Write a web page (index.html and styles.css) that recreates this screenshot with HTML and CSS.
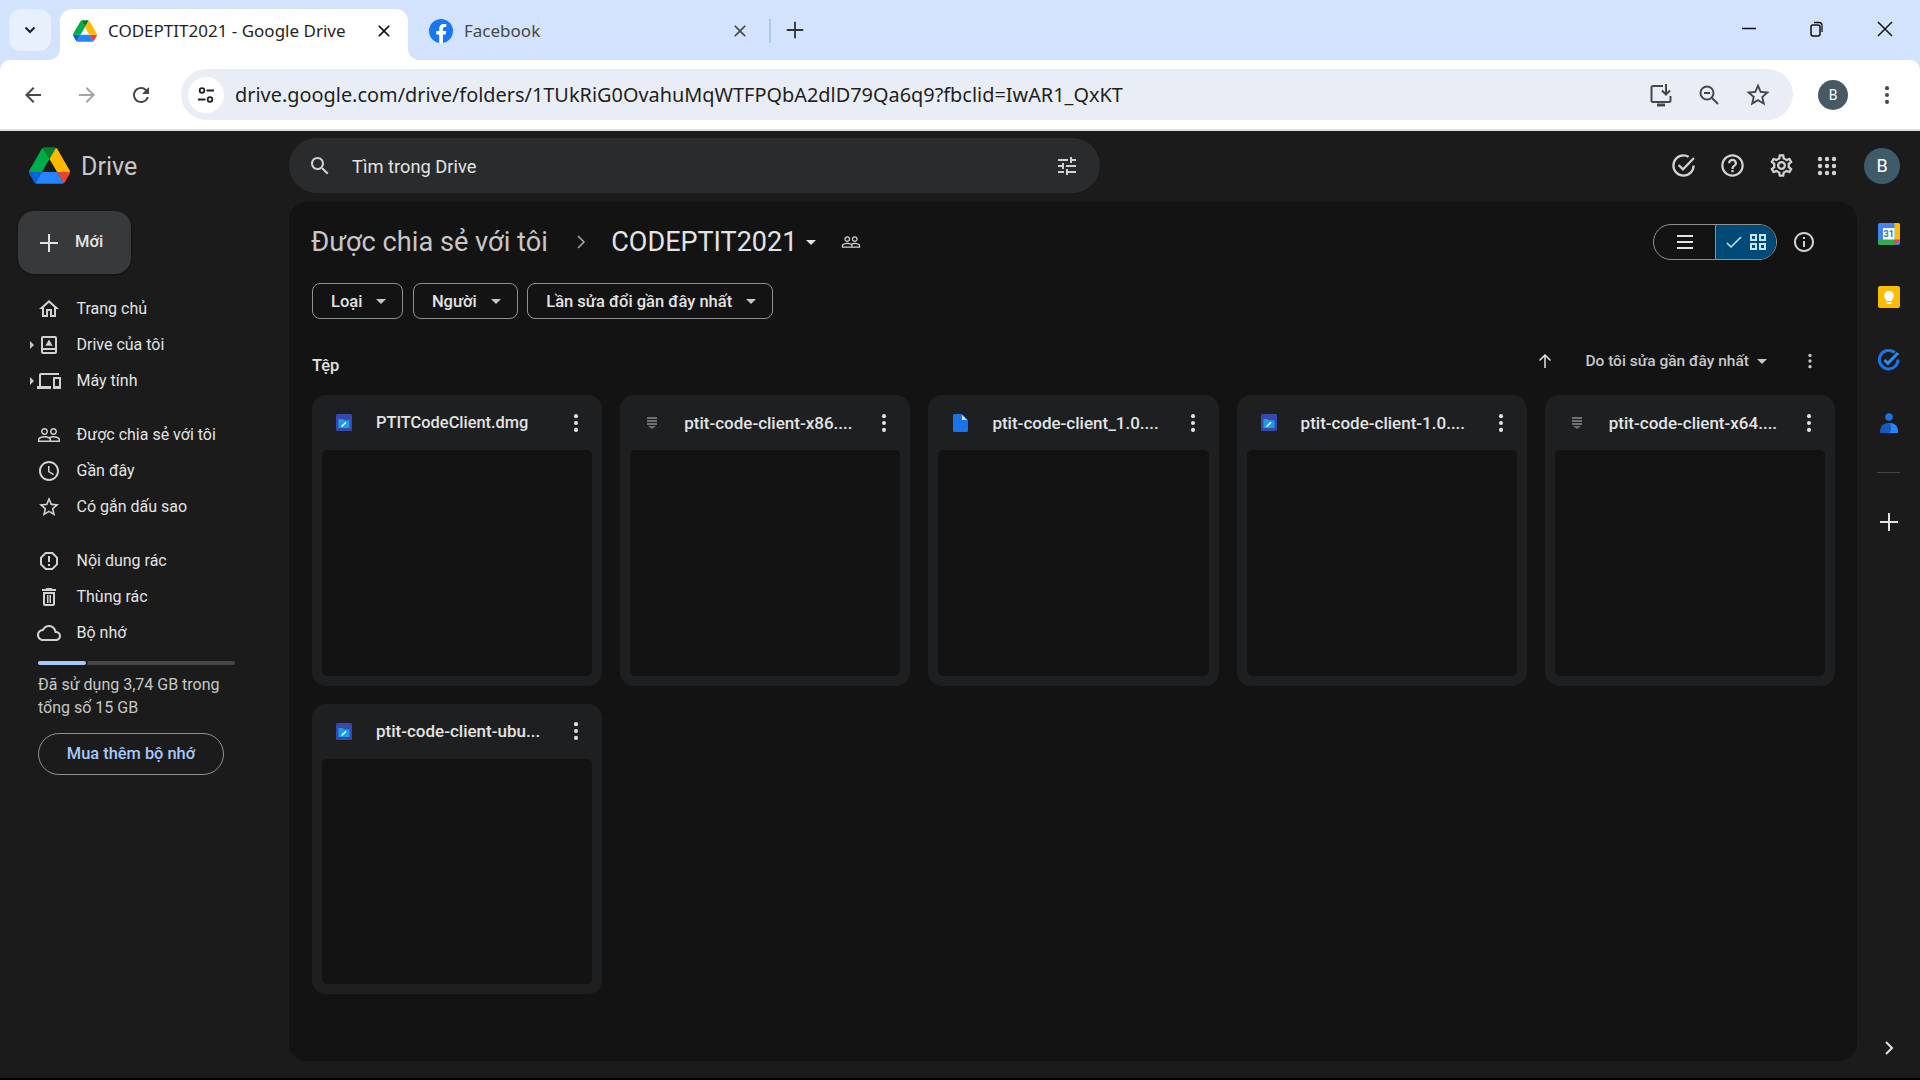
FILE: index.html
```html
<!DOCTYPE html>
<html lang="en">
<head>
    <meta charset="UTF-8">
    <meta name="viewport" content="width=device-width, initial-scale=1.0">
    <title>CODEPTIT2021 - Google Drive</title>
    <link rel="stylesheet" href="styles.css">
</head>
<body>
    <svg class="sprite">
        <symbol id="i-home" viewBox="0 0 24 24"><path d="M12 5.69l5 4.5V18h-2v-6H9v6H7v-7.81l5-4.5M12 3L2 12h3v8h6v-6h2v6h6v-8h3L12 3z"/></symbol>
        <symbol id="i-mydrive" viewBox="0 0 24 24"><path fill-rule="evenodd" d="M6 3h12a2 2 0 0 1 2 2v14a2 2 0 0 1-2 2H6a2 2 0 0 1-2-2V5a2 2 0 0 1 2-2zm0 2v10h12V5H6zm0 12v2h12v-2H6z"/><path d="M12 6.6l3.6 6.2H8.4z"/></symbol>
        <symbol id="i-devices" viewBox="0 0 24 24"><path d="M4 6h18V4H4c-1.1 0-2 .9-2 2v11H0v3h14v-3H4V6zm19 2h-6c-.55 0-1 .45-1 1v10c0 .55.45 1 1 1h6c.55 0 1-.45 1-1V9c0-.55-.45-1-1-1zm-1 9h-4v-7h4v7z"/></symbol>
        <symbol id="i-people" viewBox="0 0 24 24"><path d="M16.5 13c-1.2 0-3.07.34-4.5 1-1.43-.67-3.3-1-4.5-1C5.33 13 1 14.08 1 16.25V19h22v-2.75c0-2.17-4.33-3.25-6.5-3.25zm-4 4.5h-10v-1.25c0-.54 2.56-1.75 5-1.75s5 1.21 5 1.75v1.25zm9 0H14v-1.25c0-.46-.2-.86-.52-1.22.88-.3 1.96-.53 3.02-.53 2.44 0 5 1.21 5 1.75v1.25zM7.5 12c1.93 0 3.5-1.57 3.5-3.5S9.43 5 7.5 5 4 6.57 4 8.5 5.57 12 7.5 12zm0-5.5c1.1 0 2 .9 2 2s-.9 2-2 2-2-.9-2-2 .9-2 2-2zm9 5.5c1.93 0 3.5-1.57 3.5-3.5S18.43 5 16.5 5 13 6.57 13 8.5s1.57 3.5 3.5 3.5zm0-5.5c1.1 0 2 .9 2 2s-.9 2-2 2-2-.9-2-2 .9-2 2-2z"/></symbol>
        <symbol id="i-clock" viewBox="0 0 24 24"><path d="M11.99 2C6.47 2 2 6.48 2 12s4.47 10 9.99 10C17.52 22 22 17.52 22 12S17.52 2 11.99 2zM12 20c-4.42 0-8-3.58-8-8s3.58-8 8-8 8 3.58 8 8-3.58 8-8 8zm.5-13H11v6l5.25 3.15.75-1.23-4.5-2.67z"/></symbol>
        <symbol id="i-star" viewBox="0 0 24 24"><path d="M22 9.24l-7.19-.62L12 2 9.19 8.63 2 9.24l5.46 4.73L5.82 21 12 17.27 18.18 21l-1.63-7.03L22 9.24zM12 15.4l-3.76 2.27 1-4.28-3.32-2.88 4.38-.38L12 6.1l1.71 4.04 4.38.38-3.32 2.88 1 4.28L12 15.4z"/></symbol>
        <symbol id="i-spam" viewBox="0 0 24 24"><path d="M15.73 3H8.27L3 8.27v7.46L8.27 21h7.46L21 15.73V8.27L15.73 3zM19 14.9L14.9 19H9.1L5 14.9V9.1L9.1 5h5.8L19 9.1v5.8zM11 7h2v6h-2zM11 15h2v2h-2z"/></symbol>
        <symbol id="i-trash" viewBox="0 0 24 24"><path d="M16 9v10H8V9h8m-1.5-6h-5l-1 1H5v2h14V4h-3.5l-1-1zM18 7H6v12c0 1.1.9 2 2 2h8c1.1 0 2-.9 2-2V7z"/><path d="M10 10h1.5v8H10zM12.5 10H14v8h-1.5z"/></symbol>
        <symbol id="i-cloud" viewBox="0 0 24 24"><path d="M19.35 10.04C18.67 6.59 15.64 4 12 4 9.11 4 6.6 5.64 5.35 8.04 2.34 8.36 0 10.91 0 14c0 3.31 2.69 6 6 6h13c2.76 0 5-2.24 5-5 0-2.64-2.05-4.78-4.65-4.96zM19 18H6c-2.21 0-4-1.79-4-4 0-2.05 1.53-3.76 3.56-3.97l1.07-.11.5-.95C8.08 7.14 9.94 6 12 6c2.62 0 4.88 1.86 5.39 4.43l.3 1.5 1.53.11c1.56.1 2.78 1.41 2.78 2.96 0 1.65-1.35 3-3 3z"/></symbol>
        <symbol id="i-search" viewBox="0 0 24 24"><path d="M15.5 14h-.79l-.28-.27C15.41 12.59 16 11.11 16 9.5 16 5.91 13.09 3 9.5 3S3 5.91 3 9.5 5.91 16 9.5 16c1.61 0 3.09-.59 4.23-1.57l.27.28v.79l5 4.99L20.49 19l-4.99-5zm-6 0C7.01 14 5 11.99 5 9.5S7.01 5 9.5 5 14 7.01 14 9.5 11.99 14 9.5 14z"/></symbol>
        <symbol id="i-tune" viewBox="0 0 24 24"><path d="M3 17v2h6v-2H3zM3 5v2h10V5H3zm10 16v-2h8v-2h-8v-2h-2v6h2zM7 9v2H3v2h4v2h2V9H7zm14 4v-2H11v2h10zm-6-4h2V7h4V5h-4V3h-2v6z"/></symbol>
        <symbol id="i-help" viewBox="0 0 24 24"><path d="M11 18h2v-2h-2v2zm1-16C6.48 2 2 6.48 2 12s4.48 10 10 10 10-4.48 10-10S17.52 2 12 2zm0 18c-4.41 0-8-3.59-8-8s3.59-8 8-8 8 3.59 8 8-3.59 8-8 8zm0-14c-2.21 0-4 1.79-4 4h2c0-1.1.9-2 2-2s2 .9 2 2c0 2-3 1.75-3 5h2c0-2.25 3-2.5 3-5 0-2.21-1.79-4-4-4z"/></symbol>
        <symbol id="i-gear" viewBox="0 0 24 24"><path d="M19.43 12.98c.04-.32.07-.64.07-.98 0-.34-.03-.66-.07-.98l2.11-1.65c.19-.15.24-.42.12-.64l-2-3.46c-.09-.16-.26-.25-.44-.25-.06 0-.12.01-.17.03l-2.49 1c-.52-.4-1.08-.73-1.69-.98l-.38-2.65C14.46 2.18 14.25 2 14 2h-4c-.25 0-.46.18-.49.42l-.38 2.65c-.61.25-1.17.59-1.69.98l-2.49-1c-.06-.02-.12-.03-.18-.03-.17 0-.34.09-.43.25l-2 3.46c-.13.22-.07.49.12.64l2.11 1.65c-.04.32-.07.65-.07.98 0 .33.03.66.07.98l-2.11 1.65c-.19.15-.24.42-.12.64l2 3.46c.09.16.26.25.44.25.06 0 .12-.01.17-.03l2.49-1c.52.4 1.08.73 1.69.98l.38 2.65c.03.24.24.42.49.42h4c.25 0 .46-.18.49-.42l.38-2.65c.61-.25 1.17-.59 1.69-.98l2.49 1c.06.02.12.03.18.03.17 0 .34-.09.43-.25l2-3.46c.12-.22.07-.49-.12-.64l-2.11-1.65zm-1.98-1.71c.04.31.05.52.05.73 0 .21-.02.43-.05.73l-.14 1.13.89.7 1.08.84-.7 1.21-1.27-.51-1.04-.42-.9.68c-.43.32-.84.56-1.25.73l-1.06.43-.16 1.13-.2 1.35h-1.4l-.19-1.35-.16-1.13-1.06-.43c-.43-.18-.83-.41-1.23-.71l-.91-.7-1.06.43-1.27.51-.7-1.21 1.08-.84.89-.7-.14-1.13c-.03-.31-.05-.54-.05-.74s.02-.43.05-.73l.14-1.13-.89-.7-1.08-.84.7-1.21 1.27.51 1.04.42.9-.68c.43-.32.84-.56 1.25-.73l1.06-.43.16-1.13.2-1.35h1.39l.19 1.35.16 1.13 1.06.43c.43.18.83.41 1.23.71l.91.7 1.06-.43 1.27-.51.7 1.21-1.07.85-.89.7.14 1.13zM12 8c-2.21 0-4 1.79-4 4s1.79 4 4 4 4-1.79 4-4-1.79-4-4-4zm0 6c-1.1 0-2-.9-2-2s.9-2 2-2 2 .9 2 2-.9 2-2 2z"/></symbol>
        <symbol id="i-apps" viewBox="0 0 24 24"><circle cx="5" cy="5" r="2.200"/><circle cx="12" cy="5" r="2.200"/><circle cx="19" cy="5" r="2.200"/><circle cx="5" cy="12" r="2.200"/><circle cx="12" cy="12" r="2.200"/><circle cx="19" cy="12" r="2.200"/><circle cx="5" cy="19" r="2.200"/><circle cx="12" cy="19" r="2.200"/><circle cx="19" cy="19" r="2.200"/></symbol>
        <symbol id="i-ready" viewBox="0 0 24 24"><path d="M12 2a10 10 0 1 0 10 10h-2a8 8 0 1 1-8-8c1.4 0 2.7.36 3.85 1l1.45-1.45A9.9 9.9 0 0 0 12 2z"/><path d="M20.6 4.6L11.5 14l-3.1-3.1L7 12.300l4.500 4.500L22 6z"/></symbol>
        <symbol id="i-info" viewBox="0 0 24 24"><path d="M11 7h2v2h-2zm0 4h2v6h-2zm1-9C6.48 2 2 6.48 2 12s4.48 10 10 10 10-4.48 10-10S17.52 2 12 2zm0 18c-4.41 0-8-3.59-8-8s3.59-8 8-8 8 3.59 8 8-3.59 8-8 8z"/></symbol>
        <symbol id="i-dots" viewBox="0 0 24 24"><circle cx="12" cy="4.500" r="2.200"/><circle cx="12" cy="12" r="2.200"/><circle cx="12" cy="19.500" r="2.200"/></symbol>
        <symbol id="i-caret" viewBox="0 0 10 5"><path d="M0 0h10L5 5z"/></symbol>
        <symbol id="i-plus" viewBox="0 0 24 24"><path d="M11 3h2v8h8v2h-8v8h-2v-8H3v-2h8z"/></symbol>
        <symbol id="i-close" viewBox="0 0 24 24"><path d="M19 6.410L17.590 5 12 10.590 6.410 5 5 6.410 10.590 12 5 17.590 6.410 19 12 13.410 17.590 19 19 17.590 13.410 12z"/></symbol>
        <symbol id="i-dmg" viewBox="0 0 16 17"><rect width="16" height="17" rx="1.500" fill="#3949ab"/><path d="M2.500 5h4.200l1.200 1.300h5.600v7.700h-11z" fill="#1a9cf0"/><path d="M5.500 11.800l4-4 1 1-4 4-1.300.3z" fill="#fff"/></symbol>
        <symbol id="i-zip" viewBox="0 0 10 12"><path d="M0 0h10v2H0zM0 3h10v2H0zM0 6h10v2H0zM1 9h8l-4 3z" fill="#6f7072"/></symbol>
        <symbol id="i-doc" viewBox="0 0 15 18"><path d="M1.500 0H9l6 6v10.500a1.500 1.500 0 0 1-1.500 1.500h-12A1.500 1.500 0 0 1 0 16.500v-15A1.500 1.500 0 0 1 1.500 0z" fill="#1a73e8"/><path d="M9 1v5h5z" fill="#cfe2fb"/></symbol>
    </svg>

    <div class="tabstrip">
        <button class="tab-list">
            <svg width="14" height="14" viewBox="0 0 14 14"><path d="M2.500 4.500L7 9l4.500-4.500" fill="none" stroke="#1f1f1f" stroke-width="2"/></svg>
        </button>
        <div class="tab active">
            <svg class="favicon" viewBox="0 0 87.300 78">
                <path d="m6.600 66.850 3.850 6.650c.8 1.400 1.950 2.500 3.300 3.300l13.750-23.800h-27.500c0 1.550.4 3.100 1.200 4.500z" fill="#0066da"/>
                <path d="m43.650 25-13.750-23.800c-1.350.8-2.500 1.900-3.300 3.300l-25.400 44a9.060 9.060 0 0 0 -1.200 4.500h27.500z" fill="#00ac47"/>
                <path d="m73.550 76.800c1.350-.8 2.500-1.900 3.300-3.300l1.600-2.750 7.650-13.250c.8-1.400 1.200-2.950 1.200-4.500h-27.502l5.852 11.500z" fill="#ea4335"/>
                <path d="m43.650 25 13.750-23.800c-1.350-.8-2.900-1.200-4.500-1.200h-18.500c-1.600 0-3.150.45-4.500 1.200z" fill="#00832d"/>
                <path d="m59.800 53h-32.300l-13.750 23.800c1.350.8 2.900 1.200 4.500 1.200h50.800c1.600 0 3.150-.45 4.500-1.200z" fill="#2684fc"/>
                <path d="m73.400 26.500-12.700-22c-.8-1.400-1.950-2.500-3.300-3.300l-13.750 23.800 16.150 28h27.450c0-1.550-.4-3.100-1.200-4.500z" fill="#ffba00"/>
            </svg>
            <span class="tab-title">CODEPTIT2021 - Google Drive</span>
            <svg class="tab-close"><use href="#i-close"/></svg>
        </div>
        <div class="tab">
            <svg class="favicon" viewBox="0 0 24 24">
                <circle cx="12" cy="12" r="12" fill="#1877f2"/>
                <path d="M16.700 15.400l.5-3.400h-3.300V9.800c0-.9.5-1.800 1.900-1.800h1.500V5.100s-1.400-.2-2.600-.2c-2.700 0-4.500 1.600-4.500 4.600V12h-3v3.400h3v8.300c.6.1 1.200.2 1.900.2s1.200-.1 1.800-.2v-8.300h2.800z" fill="#fff"/>
            </svg>
            <span class="tab-title muted">Facebook</span>
            <svg class="tab-close grey"><use href="#i-close"/></svg>
        </div>
        <span class="tab-sep"></span>
        <svg class="new-tab"><use href="#i-plus"/></svg>
        <div class="window-controls">
            <button class="win-btn"><svg width="14" height="14" viewBox="0 0 14 14"><path d="M0 6.500h14" stroke="#111" stroke-width="1.500"/></svg></button>
            <button class="win-btn"><svg width="16" height="16" viewBox="0 0 16 16"><rect x="2" y="4" width="9" height="11" rx="2" fill="none" stroke="#111" stroke-width="1.500"/><path d="M5 1.500h5a3 3 0 0 1 3 3V11" fill="none" stroke="#111" stroke-width="1.300"/></svg></button>
            <button class="win-btn"><svg width="16" height="16" viewBox="0 0 16 16"><path d="M1 1l14 14M15 1L1 15" stroke="#111" stroke-width="1.500"/></svg></button>
        </div>
    </div>

    <div class="toolbar">
        <button class="tool-btn"><svg width="24" height="24" viewBox="0 0 24 24"><path d="M20 11H7.830l5.590-5.590L12 4l-8 8 8 8 1.410-1.410L7.830 13H20z" fill="#474747"/></svg></button>
        <button class="tool-btn"><svg width="24" height="24" viewBox="0 0 24 24"><path d="M4 11h12.170l-5.590-5.590L12 4l8 8-8 8-1.410-1.410L16.170 13H4z" fill="#a3a3a3"/></svg></button>
        <button class="tool-btn"><svg width="24" height="24" viewBox="0 0 24 24"><path d="M17.650 6.350A7.958 7.958 0 0 0 12 4c-4.420 0-7.990 3.580-7.990 8s3.570 8 7.990 8c3.730 0 6.840-2.550 7.730-6h-2.080A5.990 5.990 0 0 1 12 18c-3.310 0-6-2.690-6-6s2.690-6 6-6c1.660 0 3.140.69 4.220 1.780L13 11h7V4l-2.350 2.350z" fill="#474747"/></svg></button>
        <div class="omnibox">
            <span class="site-icon">
                <svg width="20" height="20" viewBox="0 0 20 20" fill="none" stroke="#1f1f1f" stroke-width="1.800"><circle cx="6" cy="5.500" r="2.300"/><path d="M10.500 5.500H18M2 14.500h7.500"/><circle cx="14" cy="14.500" r="2.300"/></svg>
            </span>
            <span class="url">drive.google.com/drive/folders/1TUkRiG0OvahuMqWTFPQbA2dlD79Qa6q9?fbclid=IwAR1_QxKT</span>
            <div class="omni-actions">
                <svg width="26" height="26" viewBox="0 0 26 26" fill="none" stroke="#474747" stroke-width="2"><path d="M15 4H5a1.500 1.500 0 0 0-1.500 1.500v13A1.500 1.500 0 0 0 5 20h16a1.500 1.500 0 0 0 1.500-1.500V14"/><path d="M18 2v10M14 8.500l4 4 4-4"/><path d="M9 23h8" stroke-width="3"/></svg>
                <svg width="24" height="24" viewBox="0 0 24 24" fill="none" stroke="#474747" stroke-width="2"><circle cx="10" cy="10" r="6.500"/><path d="M15 15l6 6M7 10h6"/></svg>
                <svg class="omni-star"><use href="#i-star"/></svg>
            </div>
        </div>
        <span class="chrome-avatar">B</span>
        <svg class="chrome-menu"><use href="#i-dots"/></svg>
    </div>

    <div class="drive">
        <header class="drive-header">
            <div class="brand">
                <svg class="brand-logo" viewBox="0 0 87.300 78">
                    <path d="m6.600 66.850 3.850 6.650c.8 1.400 1.950 2.500 3.300 3.300l13.750-23.800h-27.500c0 1.550.4 3.100 1.200 4.500z" fill="#0066da"/>
                    <path d="m43.650 25-13.750-23.800c-1.350.8-2.500 1.900-3.300 3.300l-25.400 44a9.060 9.060 0 0 0 -1.200 4.500h27.500z" fill="#00ac47"/>
                    <path d="m73.550 76.800c1.350-.8 2.500-1.900 3.300-3.300l1.600-2.750 7.650-13.250c.8-1.400 1.200-2.950 1.200-4.500h-27.502l5.852 11.500z" fill="#ea4335"/>
                    <path d="m43.650 25 13.750-23.800c-1.350-.8-2.900-1.200-4.500-1.200h-18.500c-1.600 0-3.150.45-4.500 1.200z" fill="#00832d"/>
                    <path d="m59.800 53h-32.300l-13.750 23.800c1.350.8 2.900 1.200 4.500 1.200h50.800c1.600 0 3.150-.45 4.500-1.200z" fill="#2684fc"/>
                    <path d="m73.400 26.500-12.700-22c-.8-1.400-1.950-2.500-3.300-3.300l-13.750 23.800 16.150 28h27.450c0-1.550-.4-3.100-1.200-4.500z" fill="#ffba00"/>
                </svg>
                <span class="brand-name">Drive</span>
            </div>
            <div class="search">
                <svg class="icon"><use href="#i-search"/></svg>
                <span class="search-text">Tìm trong Drive</span>
                <svg class="icon search-tune"><use href="#i-tune"/></svg>
            </div>
            <div class="header-actions">
                <svg class="icon action"><use href="#i-ready"/></svg>
                <svg class="icon action"><use href="#i-help"/></svg>
                <svg class="icon action"><use href="#i-gear"/></svg>
                <svg class="icon apps"><use href="#i-apps"/></svg>
                <span class="drive-avatar">B</span>
            </div>
        </header>

        <div class="drive-body">
            <aside class="sidebar">
                <button class="new-btn">
                    <svg class="new-icon"><use href="#i-plus"/></svg>
                    <span class="new-label">Mới</span>
                </button>
                <nav class="nav-group first">
                    <a class="nav-item"><svg class="icon"><use href="#i-home"/></svg>Trang chủ</a>
                    <a class="nav-item has-arrow"><svg class="icon"><use href="#i-mydrive"/></svg>Drive của tôi</a>
                    <a class="nav-item has-arrow"><svg class="icon"><use href="#i-devices"/></svg>Máy tính</a>
                </nav>
                <nav class="nav-group">
                    <a class="nav-item"><svg class="icon"><use href="#i-people"/></svg>Được chia sẻ với tôi</a>
                    <a class="nav-item"><svg class="icon"><use href="#i-clock"/></svg>Gần đây</a>
                    <a class="nav-item"><svg class="icon"><use href="#i-star"/></svg>Có gắn dấu sao</a>
                </nav>
                <nav class="nav-group">
                    <a class="nav-item"><svg class="icon"><use href="#i-spam"/></svg>Nội dung rác</a>
                    <a class="nav-item"><svg class="icon"><use href="#i-trash"/></svg>Thùng rác</a>
                    <a class="nav-item"><svg class="icon"><use href="#i-cloud"/></svg>Bộ nhớ</a>
                </nav>
                <div class="storage-bar"><span class="storage-used"></span></div>
                <p class="storage-text">Đã sử dụng 3,74 GB trong tổng số 15 GB</p>
                <button class="storage-btn">Mua thêm bộ nhớ</button>
            </aside>

            <main class="main">
                <div class="title-row">
                    <span class="crumb">Được chia sẻ với tôi</span>
                    <svg class="crumb-chevron" width="10" height="16" viewBox="0 0 10 16"><path d="M2 2l6 6-6 6" fill="none" stroke="#a8a8a8" stroke-width="1.500"/></svg>
                    <span class="crumb current">CODEPTIT2021</span>
                    <svg class="caret title-caret"><use href="#i-caret"/></svg>
                    <svg class="icon small title-people"><use href="#i-people"/></svg>
                    <div class="view-toggle">
                        <span class="view-list">
                            <svg width="18" height="14" viewBox="0 0 18 14" fill="#e3e3e3"><path d="M1 0h16v2H1zM1 6h16v2H1zM1 12h16v2H1z"/></svg>
                        </span>
                        <span class="view-grid">
                            <svg width="16" height="14" viewBox="0 0 16 14"><path d="M1 8l4 4 10-10" fill="none" stroke="#c2e7ff" stroke-width="1.500"/></svg>
                            <svg width="16" height="16" viewBox="0 0 16 16" fill="none" stroke="#c2e7ff" stroke-width="2"><path d="M1 1h5v5H1zM10 1h5v5h-5zM1 10h5v5H1zM10 10h5v5h-5z"/></svg>
                        </span>
                    </div>
                    <svg class="icon info"><use href="#i-info"/></svg>
                </div>

                <div class="filters">
                    <button class="chip">Loại<svg class="caret"><use href="#i-caret"/></svg></button>
                    <button class="chip">Người<svg class="caret"><use href="#i-caret"/></svg></button>
                    <button class="chip">Lần sửa đổi gần đây nhất<svg class="caret"><use href="#i-caret"/></svg></button>
                </div>

                <div class="files-head">
                    <span class="files-label">Tệp</span>
                    <svg class="sort-arrow" width="16" height="16" viewBox="0 0 16 16"><path d="M8 15V2M2.500 7.500L8 2l5.500 5.500" fill="none" stroke="#e3e3e3" stroke-width="1.500"/></svg>
                    <span class="sort-label">Do tôi sửa gần đây nhất</span>
                    <svg class="caret sort-caret"><use href="#i-caret"/></svg>
                    <svg class="dots sort-dots"><use href="#i-dots"/></svg>
                </div>

                <div class="file-grid">
                    <div class="card">
                        <div class="card-head">
                            <span class="file-icon"><svg width="16" height="17"><use href="#i-dmg"/></svg></span>
                            <span class="file-name caps">PTITCodeClient.dmg</span>
                            <svg class="dots"><use href="#i-dots"/></svg>
                        </div>
                        <div class="preview"></div>
                    </div>
                    <div class="card">
                        <div class="card-head">
                            <span class="file-icon"><svg width="10" height="12"><use href="#i-zip"/></svg></span>
                            <span class="file-name">ptit-code-client-x86....</span>
                            <svg class="dots"><use href="#i-dots"/></svg>
                        </div>
                        <div class="preview"></div>
                    </div>
                    <div class="card">
                        <div class="card-head">
                            <span class="file-icon"><svg width="15" height="18"><use href="#i-doc"/></svg></span>
                            <span class="file-name">ptit-code-client_1.0....</span>
                            <svg class="dots"><use href="#i-dots"/></svg>
                        </div>
                        <div class="preview"></div>
                    </div>
                    <div class="card">
                        <div class="card-head">
                            <span class="file-icon"><svg width="16" height="17"><use href="#i-dmg"/></svg></span>
                            <span class="file-name">ptit-code-client-1.0....</span>
                            <svg class="dots"><use href="#i-dots"/></svg>
                        </div>
                        <div class="preview"></div>
                    </div>
                    <div class="card">
                        <div class="card-head">
                            <span class="file-icon"><svg width="10" height="12"><use href="#i-zip"/></svg></span>
                            <span class="file-name">ptit-code-client-x64....</span>
                            <svg class="dots"><use href="#i-dots"/></svg>
                        </div>
                        <div class="preview"></div>
                    </div>
                    <div class="card">
                        <div class="card-head">
                            <span class="file-icon"><svg width="16" height="17"><use href="#i-dmg"/></svg></span>
                            <span class="file-name">ptit-code-client-ubu...</span>
                            <svg class="dots"><use href="#i-dots"/></svg>
                        </div>
                        <div class="preview"></div>
                    </div>
                </div>
            </main>

            <aside class="rail">
                <span class="rail-item">
                    <svg width="22" height="22" viewBox="0 0 22 22">
                        <rect width="22" height="22" rx="2" fill="#4285f4"/>
                        <path d="M16.500 0H20a2 2 0 0 1 2 2v15h-5.500z" fill="#fbbc04"/>
                        <path d="M0 16.500h17V22H2a2 2 0 0 1-2-2z" fill="#34a853"/>
                        <path d="M16.500 16.500H22L16.500 22z" fill="#ea4335"/>
                        <rect x="5" y="5" width="11.500" height="11.500" fill="#fff"/>
                        <text x="10.700" y="14.200" class="cal-day">31</text>
                    </svg>
                </span>
                <span class="rail-item">
                    <svg width="22" height="22" viewBox="0 0 22 22">
                        <rect width="22" height="22" rx="2" fill="#fbbc04"/>
                        <path d="M11 5a4.800 4.800 0 0 0-2.800 8.700V15h5.600v-1.300A4.800 4.800 0 0 0 11 5z" fill="#fff"/>
                        <path d="M8.500 16.300h5V18h-5z" fill="#fff"/>
                    </svg>
                </span>
                <span class="rail-item">
                    <svg width="22" height="22" viewBox="0 0 22 22">
                        <path d="M16.800 3.700A9.300 9.300 0 1 0 20 10.500" fill="none" stroke="#1a73e8" stroke-width="3"/>
                        <path d="M6.500 11l3.300 3.300L20 4" fill="none" stroke="#2f8bf0" stroke-width="3"/>
                    </svg>
                </span>
                <span class="rail-item">
                    <svg width="18" height="20" viewBox="0 0 18 20">
                        <circle cx="9" cy="4" r="3.800" fill="#1a73e8"/>
                        <path d="M0 19c0-6 3-9 9-9s9 3 9 9c0 .6-.4 1-1 1H1c-.6 0-1-.4-1-1z" fill="#185abc"/>
                        <path d="M9 10c6 0 9 3 9 9 0 .6-.4 1-1 1H9c3-2 3-8 0-10z" fill="#2684fc"/>
                    </svg>
                </span>
                <span class="rail-sep"></span>
                <svg class="icon rail-plus"><use href="#i-plus"/></svg>
                <svg class="rail-chevron" width="10" height="16" viewBox="0 0 10 16"><path d="M2 2l6 6-6 6" fill="none" stroke="#e3e3e3" stroke-width="2"/></svg>
            </aside>
        </div>
    </div>
</body>
</html>
```

FILE: styles.css
```css
/* Page frame */
html, body {
    height: 100%;
}

body {
    margin: 0;
    width: 1920px;
    height: 1080px;
    overflow: hidden;
    display: flex;
    flex-direction: column;
    font-family: Roboto, "Noto Sans", Arial, sans-serif;
    background-color: #d3e3fd;
}

button {
    font-family: inherit;
    background: none;
    border: none;
    padding: 0;
    color: inherit;
}

svg {
    display: block;
    flex-shrink: 0;
}

.sprite {
    display: none;
}

/* Browser tabs */
.tabstrip {
    height: 60px;
    flex-shrink: 0;
    display: flex;
    padding: 9px 0 0 9px;
    box-sizing: border-box;
    background-color: #d3e3fd;
}

.tab-list {
    width: 42px;
    height: 42px;
    border-radius: 12px;
    background-color: #e8f0fe;
    display: flex;
    align-items: center;
    justify-content: center;
    margin-right: 9px;
}

.tab {
    position: relative;
    width: 348px;
    height: 51px;
    box-sizing: border-box;
    padding: 0 14px 8px 13px;
    display: flex;
    align-items: center;
    font-family: "Noto Sans", Arial, sans-serif;
    margin-right: 8px;
}

.tab.active {
    background-color: #fff;
    border-radius: 12px 12px 0 0;
}

.tab.active::before,
.tab.active::after {
    content: "";
    position: absolute;
    bottom: 0;
    width: 12px;
    height: 12px;
}

.tab.active::before {
    left: -12px;
    background: radial-gradient(circle at 0 0, transparent 12px, #fff 12.5px);
}

.tab.active::after {
    right: -12px;
    background: radial-gradient(circle at 100% 0, transparent 12px, #fff 12.5px);
}

.favicon {
    width: 24px;
    height: 24px;
    margin-right: 11px;
}

.tab-title {
    flex: 1;
    font-size: 17px;
    color: #1f1f1f;
    white-space: nowrap;
}

.tab-title.muted {
    color: #474747;
}

.tab-close {
    width: 20px;
    height: 20px;
    fill: #111;
}

.tab-close.grey {
    fill: #474747;
}

.tab-sep {
    width: 2px;
    height: 24px;
    margin: 10px 0 0 -3px;
    background-color: #a8c7fa;
}

.new-tab {
    width: 22px;
    height: 22px;
    margin: 10px 0 0 13px;
    fill: #333;
}

.window-controls {
    margin: -9px 1px 0 auto;
    display: flex;
}

.win-btn {
    width: 68px;
    height: 58px;
    display: flex;
    align-items: center;
    justify-content: center;
}

/* Browser toolbar */
.toolbar {
    height: 71px;
    flex-shrink: 0;
    box-sizing: border-box;
    border-bottom: 2px solid #e0e0e0;
    padding-left: 11px;
    display: flex;
    align-items: center;
    background-color: #fff;
    border-radius: 10px 10px 0 0;
}

.tool-btn {
    width: 44px;
    height: 44px;
    margin-right: 10px;
    display: flex;
    align-items: center;
    justify-content: center;
}

.omnibox {
    width: 1612px;
    height: 51px;
    margin-left: 8px;
    padding: 0 21px 0 7px;
    box-sizing: border-box;
    display: flex;
    align-items: center;
    background-color: #e9eef6;
    border-radius: 26px;
}

.site-icon {
    width: 36px;
    height: 36px;
    border-radius: 50%;
    background-color: #fff;
    margin-right: 11px;
    display: flex;
    align-items: center;
    justify-content: center;
}

.url {
    font-family: "Noto Sans", Arial, sans-serif;
    font-size: 19.9px;
    color: #1f1f1f;
    white-space: nowrap;
}

.omni-actions {
    margin-left: auto;
    display: flex;
    align-items: center;
    gap: 23px;
}

.omni-star {
    width: 28px;
    height: 28px;
    fill: #474747;
}

.chrome-avatar {
    width: 30px;
    height: 30px;
    margin-left: 25px;
    border-radius: 50%;
    background-color: #455a64;
    color: #fff;
    font-size: 14px;
    display: flex;
    align-items: center;
    justify-content: center;
}

.chrome-menu {
    width: 22px;
    height: 22px;
    margin-left: 28px;
    fill: #474747;
}

/* Drive shell */
.drive {
    flex: 1;
    min-height: 0;
    display: flex;
    flex-direction: column;
    background-color: #1b1b1b;
    border-bottom: 2px solid #000;
    color: #e3e3e3;
}

.drive-header {
    height: 71px;
    flex-shrink: 0;
    box-sizing: border-box;
    padding: 0 20px 2px 0;
    display: flex;
    align-items: center;
}

.brand {
    width: 289px;
    flex-shrink: 0;
    display: flex;
    align-items: center;
    padding-left: 29px;
    box-sizing: border-box;
}

.brand-logo {
    width: 41px;
    height: 37px;
}

.brand-name {
    margin: 2px 0 0 11px;
    font-size: 25px;
    color: #c7c7c7;
}

.icon {
    width: 24px;
    height: 24px;
    fill: #d2d2d2;
}

.search {
    width: 811px;
    height: 55px;
    box-sizing: border-box;
    padding: 0 21px 0 19px;
    border-radius: 28px;
    background-color: #2a2b2d;
    display: flex;
    align-items: center;
}

.search-text {
    margin: 2px 0 0 20px;
    font-size: 18.3px;
    color: #e3e3e3;
}

.search-tune {
    margin-left: auto;
}

.header-actions {
    margin-left: auto;
    display: flex;
    align-items: center;
    gap: 25px;
}

.action {
    width: 27px;
    height: 27px;
    margin: 0 -1.5px;
}

.apps {
    margin-left: -3px;
}

.drive-avatar {
    width: 36px;
    height: 36px;
    border-radius: 50%;
    background-color: #3f5a68;
    color: #fff;
    font-size: 18px;
    display: flex;
    align-items: center;
    justify-content: center;
}

.drive-body {
    flex: 1;
    min-height: 0;
    display: flex;
}

/* Left nav */
.sidebar {
    width: 289px;
    flex-shrink: 0;
    box-sizing: border-box;
    padding: 9px 0 0 18px;
}

.new-btn {
    width: 113px;
    height: 63px;
    border-radius: 16px;
    background-color: #37393b;
    box-shadow: 0 1px 3px rgba(0, 0, 0, 0.4);
    display: flex;
    align-items: center;
    color: #e3e3e3;
    font-size: 16.5px;
    font-weight: 500;
}

.new-icon {
    width: 24px;
    height: 24px;
    margin: 0 14px 0 19px;
    fill: #e3e3e3;
}

.new-label {
    margin-bottom: 2px;
}

.nav-group {
    margin-top: 18px;
}

.nav-group.first {
    margin-top: 16px;
}

.nav-item {
    position: relative;
    height: 36px;
    margin-left: 19px;
    display: flex;
    align-items: center;
    gap: 15.5px;
    font-size: 16px;
    color: #e3e3e3;
    white-space: nowrap;
}

.nav-item .icon {
    margin-top: 2px;
}

.nav-item.has-arrow::before {
    content: "";
    position: absolute;
    left: -7px;
    top: 15px;
    border-left: 4px solid #c7c7c7;
    border-top: 4px solid transparent;
    border-bottom: 4px solid transparent;
}

.storage-bar {
    width: 197px;
    height: 4px;
    margin: 11px 0 0 20px;
    border-radius: 2px;
    background-color: #444746;
}

.storage-used {
    display: block;
    width: 48px;
    height: 4px;
    border-radius: 2px;
    background-color: #a8c7fa;
    box-shadow: 2px 0 0 #1b1b1b;
}

.storage-text {
    width: 195px;
    margin: 8px 0 0 20px;
    font-size: 16px;
    line-height: 23px;
    color: #c7c7c7;
}

.storage-btn {
    width: 186px;
    height: 42px;
    margin: 14px 0 0 20px;
    padding-bottom: 1px;
    border: 1px solid #8e918f;
    border-radius: 21px;
    color: #a8c7fa;
    font-size: 16.4px;
    font-weight: 500;
}

/* Main panel */
.main {
    width: 1568px;
    flex-shrink: 0;
    margin-bottom: 17px;
    box-sizing: border-box;
    padding: 22px 22px 0 23px;
    border-radius: 18px;
    background-color: #131314;
}

.title-row {
    height: 36px;
    display: flex;
    align-items: center;
}

.crumb {
    margin-left: -1px;
    font-size: 27.2px;
    color: #c7c7c7;
    white-space: nowrap;
}

.crumb.current {
    margin-left: 0;
    font-size: 27px;
    color: #e3e3e3;
}

.crumb-chevron {
    margin: 0 25.5px 0 28px;
}

.caret {
    width: 10px;
    height: 5px;
    fill: #c7c7c7;
}

.title-caret {
    margin-left: 9px;
    fill: #e3e3e3;
}

.title-people {
    margin-left: 25px;
    width: 20px;
    height: 20px;
}

.view-toggle {
    margin-left: auto;
    width: 124px;
    height: 36px;
    box-sizing: border-box;
    border: 1px solid #8e918f;
    border-radius: 18px;
    overflow: hidden;
    display: flex;
}

.view-list {
    width: 61px;
    border-right: 1px solid #8e918f;
    display: flex;
    align-items: center;
    justify-content: center;
}

.view-grid {
    flex: 1;
    background-color: #004a77;
    display: flex;
    align-items: center;
    justify-content: center;
    gap: 8px;
}

.info {
    margin: 0 19px 0 15px;
}

.filters {
    margin-top: 23px;
    display: flex;
    gap: 9.5px;
}

.chip {
    height: 36px;
    box-sizing: border-box;
    padding: 0 16px 0 18px;
    border: 1px solid #8e918f;
    border-radius: 8px;
    display: flex;
    align-items: center;
    gap: 14px;
    color: #e3e3e3;
    font-size: 16.5px;
    font-weight: 500;
}

.files-head {
    height: 36px;
    margin-top: 24px;
    display: flex;
    align-items: center;
}

.files-label {
    margin-top: 8px;
    font-size: 16.5px;
    font-weight: 500;
    color: #e3e3e3;
}

.sort-arrow {
    margin-left: auto;
}

.sort-label {
    margin-left: 32px;
    font-size: 15.5px;
    font-weight: 500;
    color: #c7c7c7;
}

.sort-caret {
    margin-left: 8px;
}

.dots {
    width: 22px;
    height: 22px;
    fill: #e3e3e3;
}

.sort-dots {
    width: 18px;
    height: 18px;
    margin: 0 16px 0 34px;
    fill: #c7c7c7;
}

.file-grid {
    margin-top: 16px;
    display: grid;
    grid-template-columns: repeat(5, 1fr);
    grid-auto-rows: 290.5px;
    gap: 18px;
}

.card {
    border-radius: 14px;
    background-color: #1e1f21;
    padding: 0 10px 10px;
    display: flex;
    flex-direction: column;
}

.card-head {
    height: 55px;
    flex-shrink: 0;
    display: flex;
    align-items: center;
    padding: 0 5px 0 14px;
}

.file-icon {
    width: 16px;
    display: flex;
    justify-content: center;
    margin-right: 24px;
}

.file-name {
    flex: 1;
    font-size: 17px;
    font-weight: 500;
    color: #e3e3e3;
    white-space: nowrap;
}

.file-name.caps {
    font-size: 16.4px;
}

.preview {
    flex: 1;
    border-radius: 5px;
    background-color: #131314;
}

/* Right rail */
.rail {
    flex: 1;
    display: flex;
    flex-direction: column;
    align-items: center;
}

.rail-item {
    height: 63px;
    flex-shrink: 0;
    display: flex;
    align-items: center;
}

.cal-day {
    font-family: Roboto, sans-serif;
    font-size: 9px;
    font-weight: 700;
    fill: #1a73e8;
    text-anchor: middle;
}

.rail-sep {
    width: 23px;
    height: 1px;
    margin-top: 18px;
    background-color: #444746;
}

.rail-plus {
    margin-top: 37px;
    fill: #e3e3e3;
}

.rail-chevron {
    margin: auto 0 22px;
}
```
